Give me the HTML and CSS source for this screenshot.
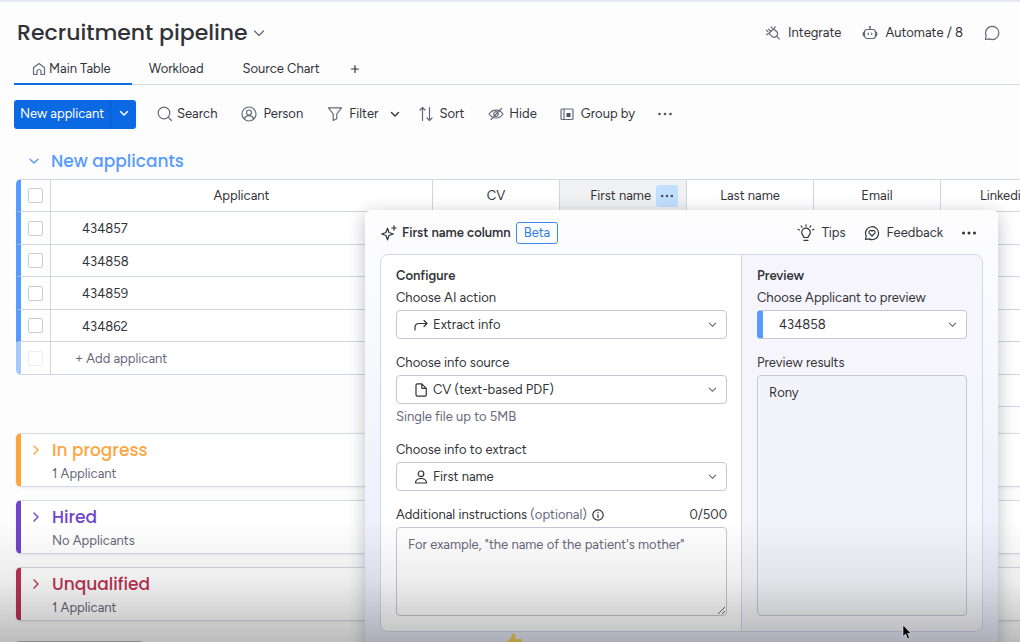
FILE: index.html
```html
<!DOCTYPE html>
<html lang="en">
<head>
    <meta charset="UTF-8">
    <meta name="viewport" content="width=device-width, initial-scale=1.0">
    <title>Recruitment pipeline</title>
    <link rel="stylesheet" href="styles.css">
</head>
<body>
    <header class="board-header">
        <div class="board-title">
            <h1>Recruitment pipeline</h1>
            <svg class="icon chevron" viewBox="0 0 12 12"><path d="M1.5 4 6 8.5 10.5 4"/></svg>
        </div>
        <div class="board-actions">
            <button class="action">
                <svg class="icon" viewBox="0 0 16 16"><path d="M4 8.300 8.700 3.800 12.500 7.500v2.300l-2.300 2.300H7.800zM11.500 11.200l2.800 2.900M5.800 6.500 3.500 4.200M1.300 5.200l1.500 1.500M1.500 9.800 4 8.300M8.700 3.800l1.500-2M6 1.800l1.300 1.300"/></svg>
                Integrate
            </button>
            <button class="action">
                <svg class="icon" viewBox="0 0 16 16"><rect x="2.500" y="4.500" width="11" height="9" rx="2.800"/><path d="M8 4.500V2.200M1.300 7.500v3M14.700 7.500v3M2 7v4M14 7v4M6.300 8v1.500M9.700 8v1.500"/><circle cx="8" cy="2" r=".5"/></svg>
                Automate / 8
            </button>
            <button class="action" aria-label="Discussion">
                <svg class="icon" viewBox="0 0 16 16"><path d="M1.500 14.500l.6-4A6.600 6.600 0 1 1 5.300 13.900z"/></svg>
            </button>
        </div>
    </header>

    <nav class="tabs">
        <a class="tab active" href="#">
            <svg class="icon" viewBox="0 0 14 14"><path d="M1.500 5.800 7 1.500l5.500 4.300v6.700H9V9.500a2 2 0 0 0-4 0v3H1.500z"/></svg>
            Main Table
        </a>
        <a class="tab" href="#">Workload</a>
        <a class="tab" href="#">Source Chart</a>
        <button class="tab-add" aria-label="Add view"><svg class="icon" viewBox="0 0 10 10"><path d="M5 1.500v7M1.500 5h7"/></svg></button>
    </nav>

    <div class="toolbar">
        <div class="new-item">
            <button class="new-item-main">New applicant</button>
            <button class="new-item-more" aria-label="More"><svg class="icon" viewBox="0 0 10 10"><path d="M1.500 3.500 5 7l3.500-3.500"/></svg></button>
        </div>
        <button class="tool tool-search">
            <svg class="icon" viewBox="0 0 16 16"><circle cx="7" cy="7" r="5.800"/><path d="M11.200 11.200l3.300 3.300"/></svg>
            Search
        </button>
        <button class="tool tool-person">
            <svg class="icon" viewBox="0 0 16 16"><circle cx="8" cy="8" r="7"/><circle cx="8" cy="6.500" r="2.500"/><path d="M3.500 13c.5-2.300 2-3.300 4.500-3.300s4 1 4.500 3.300"/></svg>
            Person
        </button>
        <button class="tool tool-filter">
            <svg class="icon" viewBox="0 0 16 16"><path d="M1.500 1.800h13L9.800 8v4.800l-3.600 1.700V8z"/></svg>
            Filter
            <svg class="icon small" viewBox="0 0 10 10"><path d="M1.500 3.500 5 7l3.500-3.500"/></svg>
        </button>
        <button class="tool tool-sort">
            <svg class="icon" viewBox="0 0 16 16"><path d="M4.500 14.500v-13M2 4l2.500-2.500L7 4M11.500 1.500v13M9 12l2.500 2.500L14 12"/></svg>
            Sort
        </button>
        <button class="tool tool-hide">
            <svg class="icon" viewBox="0 0 16 16"><path d="M1 8c3.500-5.300 10.500-5.300 14 0-3.500 5.300-10.500 5.300-14 0zM3 13.500l10.500-11M6 9.500C5 7 7 5 9.500 6M10.300 7.500c.3 1.700-1 3-2.800 2.800"/></svg>
            Hide
        </button>
        <button class="tool tool-group">
            <svg class="icon" viewBox="0 0 16 16"><rect x="2" y="3" width="12" height="10.500" rx="1"/><path d="M5 3v10.500"/><rect class="solid" x="7.500" y="7" width="4" height="4"/></svg>
            Group by
        </button>
        <button class="tool tool-more" aria-label="More options">
            <svg class="icon dots" viewBox="0 0 16 16"><circle cx="2.500" cy="8" r="1.300"/><circle cx="8" cy="8" r="1.300"/><circle cx="13.500" cy="8" r="1.300"/></svg>
        </button>
    </div>

    <main class="board">
        <div class="group-title">
            <svg class="icon small" viewBox="0 0 10 10"><path d="M1 3.200 5 7l4-3.800"/></svg>
            <h2>New applicants</h2>
        </div>

        <table class="items">
            <colgroup>
                <col class="col-check">
                <col class="col-name">
                <col span="5" class="col-data">
            </colgroup>
            <thead>
                <tr>
                    <th class="check"><input type="checkbox" aria-label="Select all"></th>
                    <th>Applicant</th>
                    <th>CV</th>
                    <th class="selected"><span class="head-cell">First name <button class="col-menu" aria-label="Column menu"><svg class="icon dots" viewBox="0 0 16 16"><circle cx="2.500" cy="8" r="1.500"/><circle cx="8" cy="8" r="1.500"/><circle cx="13.500" cy="8" r="1.500"/></svg></button></span></th>
                    <th>Last name</th>
                    <th>Email</th>
                    <th>Linkedin</th>
                </tr>
            </thead>
            <tbody>
                <tr>
                    <td class="check"><input type="checkbox" aria-label="Select 434857"></td>
                    <td class="name">434857</td>
                    <td></td><td></td><td></td><td></td><td></td>
                </tr>
                <tr>
                    <td class="check"><input type="checkbox" aria-label="Select 434858"></td>
                    <td class="name">434858</td>
                    <td></td><td></td><td></td><td></td><td></td>
                </tr>
                <tr>
                    <td class="check"><input type="checkbox" aria-label="Select 434859"></td>
                    <td class="name">434859</td>
                    <td></td><td></td><td></td><td></td><td></td>
                </tr>
                <tr>
                    <td class="check"><input type="checkbox" aria-label="Select 434862"></td>
                    <td class="name">434862</td>
                    <td></td><td></td><td></td><td></td><td></td>
                </tr>
                <tr class="add-row">
                    <td class="check"><input type="checkbox" aria-label="Select new" disabled></td>
                    <td class="add" colspan="6">+ Add applicant</td>
                </tr>
                <tr class="summary-row">
                    <td class="blank" colspan="2"></td>
                    <td></td><td></td><td></td><td></td><td></td>
                </tr>
            </tbody>
        </table>

        <section class="group orange">
            <svg class="icon small" viewBox="0 0 10 10"><path d="M3 1l4 4-4 4"/></svg>
            <div>
                <h2>In progress</h2>
                <p>1 Applicant</p>
            </div>
        </section>
        <section class="group purple">
            <svg class="icon small" viewBox="0 0 10 10"><path d="M3 1l4 4-4 4"/></svg>
            <div>
                <h2>Hired</h2>
                <p>No Applicants</p>
            </div>
        </section>
        <section class="group red">
            <svg class="icon small" viewBox="0 0 10 10"><path d="M3 1l4 4-4 4"/></svg>
            <div>
                <h2>Unqualified</h2>
                <p>1 Applicant</p>
            </div>
        </section>
        <button class="add-group" aria-label="Add new group"></button>
    </main>

    <div class="modal">
        <div class="modal-header">
            <svg class="icon" viewBox="0 0 16 16"><path d="M6.500 3.200 8 7.500l4.300 1.500L8 10.500l-1.500 4.300L5 10.500.7 9 5 7.500zM13 .8v4.400M10.800 3h4.400"/></svg>
            <h3>First name column</h3>
            <span class="beta">Beta</span>
            <div class="modal-actions">
                <button class="action tips">
                    <svg class="icon" viewBox="0 0 18 18"><path d="M7 13.500c0-1.500-2.300-2.500-2.300-5a4.300 4.300 0 0 1 8.600 0c0 2.500-2.300 3.500-2.300 5zM7 16.300h4M9 .8v1.500M4.200 2l.8 1.200M13.800 2 13 3.200M1 5.300l1.500.7M17 5.300l-1.500.7"/></svg>
                    Tips
                </button>
                <button class="action">
                    <svg class="icon" viewBox="0 0 16 16"><path d="M1.500 14.500l.7-3.500A6.500 6.500 0 1 1 5 13.900z"/><path d="M8 11 5.200 8.200C4 6.500 6.300 4.300 8 6.200c1.700-1.900 4 .3 2.800 2z"/></svg>
                    Feedback
                </button>
                <button class="action" aria-label="More">
                    <svg class="icon dots" viewBox="0 0 16 16"><circle cx="2.500" cy="8" r="1.500"/><circle cx="8" cy="8" r="1.500"/><circle cx="13.500" cy="8" r="1.500"/></svg>
                </button>
            </div>
        </div>

        <div class="modal-body">
            <form class="configure">
                <h4>Configure</h4>
                <div class="field">
                    <label for="ai-action">Choose AI action</label>
                    <div class="select">
                        <svg class="icon lead" viewBox="0 0 14 14"><path d="M1 12V9.500C1 7 2.500 5.500 5 5.500h8M10 2.500l3 3-3 3"/></svg>
                        <select id="ai-action"><option>Extract info</option></select>
                        <svg class="icon arrow" viewBox="0 0 10 10"><path d="M1.500 3.500 5 7l3.500-3.500"/></svg>
                    </div>
                </div>
                <div class="field">
                    <label for="info-source">Choose info source</label>
                    <div class="select">
                        <svg class="icon lead" viewBox="0 0 14 14"><path d="M3.400.8h4.400l4.500 4.500v6.500a1.400 1.400 0 0 1-1.400 1.400H3.400A1.400 1.400 0 0 1 2 11.800V2.200A1.400 1.400 0 0 1 3.400.8zM7.800.8v4.500h4.500"/></svg>
                        <select id="info-source"><option>CV (text-based PDF)</option></select>
                        <svg class="icon arrow" viewBox="0 0 10 10"><path d="M1.500 3.500 5 7l3.500-3.500"/></svg>
                    </div>
                    <p class="hint">Single file up to 5MB</p>
                </div>
                <div class="field">
                    <label for="info-extract">Choose info to extract</label>
                    <div class="select">
                        <svg class="icon lead" viewBox="0 0 14 14"><circle cx="7" cy="3.800" r="2.800"/><path d="M1.500 13c-.5-6 11.500-6 11 0z"/></svg>
                        <select id="info-extract"><option>First name</option></select>
                        <svg class="icon arrow" viewBox="0 0 10 10"><path d="M1.500 3.500 5 7l3.500-3.500"/></svg>
                    </div>
                </div>
                <div class="field">
                    <div class="label-row">
                        <label for="instructions">Additional instructions <span>(optional)</span></label>
                        <svg class="icon info" viewBox="0 0 12 12"><circle cx="6" cy="6" r="5.200"/><path d="M6 5.800v2.700M6 3.400v.3"/></svg>
                        <span class="counter">0/500</span>
                    </div>
                    <textarea id="instructions" placeholder="For example, &quot;the name of the patient's mother&quot;"></textarea>
                </div>
            </form>
            <div class="preview">
                <h4>Preview</h4>
                <div class="field">
                    <label for="preview-item">Choose Applicant to preview</label>
                    <div class="select item-select">
                        <select id="preview-item"><option>434858</option></select>
                        <svg class="icon arrow" viewBox="0 0 10 10"><path d="M1.500 3.500 5 7l3.500-3.500"/></svg>
                    </div>
                </div>
                <div class="field results">
                    <label for="preview-results">Preview results</label>
                    <output id="preview-results">Rony</output>
                </div>
            </div>
        </div>
        <svg class="thumb" viewBox="0 0 20 20"><path d="M10 1.500C10.500 0 13.500 0 13.500 2.500L13.200 6H18c2.500 0 2.500 2.500 1.500 3.500L18 18H8c-3 0-7-2-7-5s1-4 3.500-4.500C8 7 9.500 4 10 1.500z"/></svg>
    </div>

    <div class="shade"></div>
    <svg class="cursor" viewBox="0 0 10 16"><path d="M1 1v11.500l2.600-2.400 2 4.700 2-.9-2-4.500H9z"/></svg>
</body>
</html>
```

FILE: styles.css
```css
* {
    box-sizing: border-box;
}

body, html {
    margin: 0;
    height: 100vh;
    overflow: hidden;
}

body {
    position: relative;
    border-top: 2px solid #e6e9f5;
    background: #fdfdfe;
    color: #323338;
    font-family: Figtree, Inter, sans-serif;
    font-size: 13px;
    line-height: 20px;
}

h1, h2, h3, h4, p {
    margin: 0;
}

h1, h2 {
    font-family: Poppins, Inter, sans-serif;
    font-weight: 500;
}

button, select, textarea {
    padding: 0;
    border: 0;
    background: none;
    color: inherit;
    font: inherit;
}

.icon {
    flex: none;
    width: 16px;
    height: 16px;
    fill: none;
    stroke: #676879;
    stroke-width: 1.2;
    stroke-linecap: round;
    stroke-linejoin: round;
}

.icon.small {
    width: 10px;
    height: 10px;
    stroke-width: 1.4;
}

.icon.dots, .icon .solid {
    fill: #50515f;
    stroke: none;
}

/* header */
.board-header {
    display: flex;
    justify-content: space-between;
    align-items: center;
    height: 60px;
    padding: 2px 20px 0 17px;
}

.board-title {
    display: flex;
    align-items: center;
    gap: 5px;
}

.board-title h1 {
    font-size: 22px;
    line-height: 32px;
}

.chevron {
    width: 12px;
    height: 12px;
}

.board-actions {
    display: flex;
    gap: 21px;
}

.action {
    display: flex;
    align-items: center;
    gap: 7px;
}

/* tabs */
.tabs {
    display: flex;
    height: 23px;
    margin-left: 14px;
    border-bottom: 1px solid #d6d9e8;
}

.tab {
    height: 23px;
    padding: 0 17px;
    color: inherit;
    text-decoration: none;
    line-height: 13px;
}

.tab + .tab {
    padding-right: 22px;
}

.tab.active {
    display: flex;
    gap: 3px;
    border-bottom: 2px solid #0f6fe0;
    padding-right: 21px;
    padding-left: 18px;
}

.tab .icon {
    width: 14px;
    height: 14px;
}

.tab-add {
    align-self: flex-start;
    height: 13px;
    margin-left: 8px;
}

.tab-add .icon {
    display: block;
    width: 10px;
    height: 10px;
    stroke: #323338;
}

/* toolbar */
.toolbar {
    display: flex;
    align-items: center;
    height: 58px;
    padding-left: 14px;
}

.new-item {
    display: flex;
    height: 29px;
    border-radius: 3px;
    background: #0b69e3;
    color: #fff;
}

.new-item-main {
    width: 97px;
    border-right: 1px solid #0a5bc7;
}

.new-item-more {
    width: 25px;
}

.new-item-more .icon {
    width: 10px;
    height: 10px;
    stroke: #fff;
    stroke-width: 1.5;
}

.tool {
    display: flex;
    align-items: center;
    gap: 5px;
    margin-left: 24px;
    white-space: nowrap;
}

.tool-search {
    gap: 4px;
    margin-left: 21px;
}

.tool-person, .tool-filter, .tool-group {
    gap: 6px;
}

.tool-filter .small {
    margin-left: 6px;
    stroke: #323338;
}

.tool-sort {
    margin-left: 18px;
}

.tool-group, .tool-more {
    margin-left: 22px;
}

.board {
    padding-left: 16px;
}

/* groups */
.group-title {
    display: flex;
    align-items: center;
    gap: 12px;
    height: 36px;
    padding: 0 0 1px 13px;
    color: #579bfc;
}

h2 {
    font-size: 17px;
    line-height: 24px;
}

.group-title .icon {
    stroke: #579bfc;
}

.items {
    width: 1052px;
    table-layout: fixed;
    border-spacing: 0;
}

.col-check {
    width: 35px;
}

.col-name {
    width: 382px;
}

.col-data {
    width: 127px;
}

.items th, .items td {
    height: 33px;
    padding: 0;
    border-right: 1px solid #d0d4e4;
    border-bottom: 1px solid #d0d4e4;
    background: #fff;
    font-weight: 400;
}

.items tbody tr:nth-child(even) td {
    height: 32px;
}

.items th {
    border-top: 1px solid #d0d4e4;
}

.items .check {
    border-left: 5px solid #579bfc;
    text-align: center;
}

.items th.check {
    border-top-left-radius: 5px;
}

.items input {
    display: block;
    width: 15px;
    height: 15px;
    margin: 0 auto;
    border: 1px solid #c9ccdc;
    border-radius: 2px;
    background: #fff;
    appearance: none;
}

.items .selected {
    background: #f0f1f3;
}

.head-cell {
    display: flex;
    justify-content: flex-end;
    align-items: center;
    gap: 5px;
    padding-right: 8px;
}

.col-menu {
    display: flex;
    justify-content: center;
    align-items: center;
    width: 22px;
    height: 22px;
    border-radius: 3px;
    background: #c2dffd;
}

.col-menu .icon {
    width: 14px;
    height: 14px;
}

.items .name {
    padding: 2px 0 0 31px;
}

.items .add-row .check {
    border-left-color: #a6cafd;
    border-bottom-left-radius: 5px;
}

.items .add-row input {
    border-color: #eceef5;
}

.items .add {
    padding: 2px 0 0 24px;
    color: #676879;
}

.items .summary-row .blank {
    border-bottom: 0;
    background: none;
}

.group {
    display: flex;
    gap: 11px;
    height: 54px;
    margin-bottom: 13px;
    padding: 4px 0 0 10px;
    border: 1px solid #d6d9e6;
    border-left: 5px solid;
    border-right: 0;
    border-radius: 5px 0 0 5px;
    background: #fff;
    box-shadow: 0 1px 3px rgba(40, 40, 80, 0.08);
}

.items + .group {
    margin-top: 26px;
}

.group .icon {
    margin-top: 7px;
    stroke: currentColor;
}

.group p {
    margin-top: 2px;
    color: #676879;
}

.orange {
    border-left-color: #fda63f;
    color: #fda63f;
}

.purple {
    border-left-color: #6f45cc;
    color: #6f45cc;
}

.red {
    border-left-color: #bb3354;
    color: #bb3354;
}

.add-group {
    display: block;
    width: 127px;
    height: 30px;
    margin-top: 20px;
    border: 1px solid #b8bac6;
    border-radius: 3px;
}

/* AI column dialog */
.modal {
    position: absolute;
    top: 208px;
    left: 365px;
    right: 22px;
    height: 460px;
    padding: 0 15px;
    border-radius: 6px;
    background: linear-gradient(#fdfdfe, #f8f9fd 30%, #edf0fb 70%, #e6e9f8);
    box-shadow: 0 4px 18px rgba(30, 30, 50, 0.28);
}

.modal-header {
    display: flex;
    align-items: center;
    gap: 5px;
    height: 44px;
    padding: 2px 6px 0 1px;
}

.modal .icon {
    stroke: #323338;
}

.modal .icon.dots {
    fill: #323338;
    stroke: none;
}

h3, h4 {
    font-size: 13px;
    font-weight: 600;
}

.beta {
    height: 22px;
    padding: 0 7px;
    border: 1px solid #3c8af0;
    border-radius: 3px;
    color: #2f7de0;
}

.modal-actions {
    display: flex;
    gap: 18px;
    margin-left: auto;
}

.tips .icon {
    width: 18px;
    height: 18px;
}

.modal-body {
    display: grid;
    grid-template-columns: minmax(0, 1fr) 241px;
    border: 1px solid #d3d6e8;
    border-radius: 8px;
    background: #fff;
}

.configure, .preview {
    padding: 11px 15px 15px;
}

.configure {
    padding-right: 14px;
}

.preview {
    display: flex;
    flex-direction: column;
    border-left: 1px solid #d3d6e8;
    border-radius: 0 8px 8px 0;
    background: #f6f5fb;
}

h4 {
    margin-bottom: 2px;
}

.field {
    display: flex;
    flex-direction: column;
    gap: 2px;
    margin-bottom: 14px;
}

.field:last-child {
    margin-bottom: 0;
}

.select {
    display: flex;
    position: relative;
    height: 29px;
}

.select select {
    width: 100%;
    padding-left: 36px;
    border: 1px solid #c5c7d6;
    border-radius: 4px;
    background: #fff;
    appearance: none;
}

.select .lead {
    position: absolute;
    top: 8px;
    left: 18px;
    width: 14px;
    height: 14px;
}

.select .arrow {
    position: absolute;
    top: 10px;
    right: 10px;
    width: 9px;
    height: 9px;
    stroke: #676879;
}

.item-select select {
    padding-left: 16px;
    border-left: 6px solid #579bfc;
}

.hint {
    margin-top: 2px;
    color: #676879;
    line-height: 18px;
}

.label-row {
    display: flex;
    align-items: center;
    gap: 5px;
}

.label-row label span {
    color: #676879;
}

.label-row .info {
    width: 12px;
    height: 12px;
}

.counter {
    margin-left: auto;
}

textarea {
    height: 89px;
    padding: 7px 11px;
    border: 1px solid #c5c7d6;
    border-radius: 4px;
    background: #fff;
    resize: vertical;
}

textarea::placeholder {
    color: #676879;
}

.results {
    flex: 1;
}

output {
    flex: 1;
    padding: 7px 11px;
    border: 1px solid #c5c7d6;
    border-radius: 4px;
    background: #f3f4f9;
}

.thumb {
    position: absolute;
    top: 423px;
    left: 137px;
    width: 20px;
    height: 20px;
    fill: #f7cf58;
}

.shade {
    position: absolute;
    right: 0;
    bottom: 0;
    left: 0;
    height: 122px;
    background: linear-gradient(transparent, rgba(0, 0, 0, 0.07) 50%, rgba(0, 0, 0, 0.26));
    pointer-events: none;
}

.cursor {
    position: absolute;
    top: 622px;
    left: 902px;
    width: 10px;
    height: 16px;
    fill: #000;
    stroke: #eee;
    stroke-width: 0.6;
}
```
